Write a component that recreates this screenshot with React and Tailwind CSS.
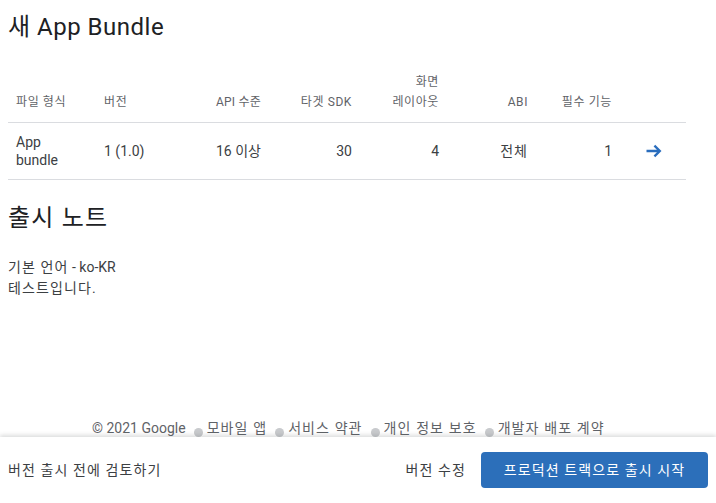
import React from 'react';

const font = { fontFamily: 'Roboto, "Noto Sans CJK KR", sans-serif' };

const cols = 'grid grid-cols-[88px_112px_63px_89px_87px_89px_84px_66px]';

function FooterLink({ children, bullet, ko }) {
  return (
    <li className="flex items-center">
      {bullet && <span className="mr-[4px] ml-[8px] mt-[9px] inline-block h-[9px] w-[9px] rounded-full bg-[#c8cacd]" />}
      <span className={ko ? 'tracking-[1.1px]' : ''}>{children}</span>
    </li>
  );
}

export default function App() {
  return (
    <div className="relative flex h-[503px] w-[716px] flex-col overflow-hidden bg-white text-[#202124]" style={font}>
      <h1 className="px-2 pt-[13px] text-[24px] leading-[28px] tracking-[0.5px] text-[#202124]">새 App Bundle</h1>

      <div className="mx-2 mt-[31px] w-[678px] text-[12px]">
        <div className={`${cols} items-end border-b border-[#dadce0] pb-[10px] leading-[20px] tracking-[0.6px] text-[#5f6368]`}>
          <div className="px-2">파일 형식</div>
          <div className="px-2">버전</div>
          <div className="whitespace-nowrap px-2 text-left tracking-[0.2px]">API 수준</div>
          <div className="px-2 text-right">타겟 SDK</div>
          <div className="px-2 text-right">화면<br />레이아웃</div>
          <div className="px-2 text-right">ABI</div>
          <div className="px-2 text-right">필수 기능</div>
          <div />
        </div>
        <div className={`${cols} h-[57px] items-center border-b border-[#dadce0] text-[14px] leading-[18px] text-[#3c4043]`}>
          <div className="px-2">App<br />bundle</div>
          <div className="px-2">1 (1.0)</div>
          <div className="px-2">16 이상</div>
          <div className="px-2 text-right">30</div>
          <div className="px-2 text-right">4</div>
          <div className="px-2 text-right tracking-[1px]">전체</div>
          <div className="px-2 text-right">1</div>
          <div className="flex justify-center">
            <svg width="20" height="20" viewBox="0 0 24 24" className="ml-[1px]">
              <path d="M3 12h16M12.5 5.5l6.5 6.5-6.5 6.5" fill="none" stroke="#2a6dbd" strokeWidth="2.8" />
            </svg>
          </div>
        </div>
      </div>

      <h2 className="px-2 pt-[23px] text-[24px] leading-[30px] tracking-[1.2px] text-[#202124]">출시 노트</h2>
      <div className="px-2 pt-[24px] text-[14px] leading-[21px] text-[#3c4043]">
        <p><span className="tracking-[1.1px]">기본 언어</span> - ko-KR</p>
        <p className="tracking-[1.1px]">테스트입니다.</p>
      </div>

      <ul className="mt-auto mb-[65px] flex h-[20px] pl-[92px] text-[14px] leading-[20px] text-[#5f6368]">
        <FooterLink>© 2021 Google</FooterLink>
        <FooterLink bullet ko>모바일 앱</FooterLink>
        <FooterLink bullet ko>서비스 약관</FooterLink>
        <FooterLink bullet ko>개인 정보 보호</FooterLink>
        <FooterLink bullet ko>개발자 배포 계약</FooterLink>
      </ul>

      <div className="absolute inset-x-0 bottom-0 flex h-[66px] items-center bg-white px-2 text-[14px] tracking-[1.1px] text-[#3c4043] shadow-[0_-2px_4px_rgba(60,64,67,0.18)]">
        <span>버전 출시 전에 검토하기</span>
        <span className="ml-auto mr-[15px]">버전 수정</span>
        <button className="h-[36px] w-[227px] rounded-[4px] bg-[#2c6fba] text-[14px] tracking-[1.1px] text-white">
          프로덕션 트랙으로 출시 시작
        </button>
      </div>
    </div>
  );
}
